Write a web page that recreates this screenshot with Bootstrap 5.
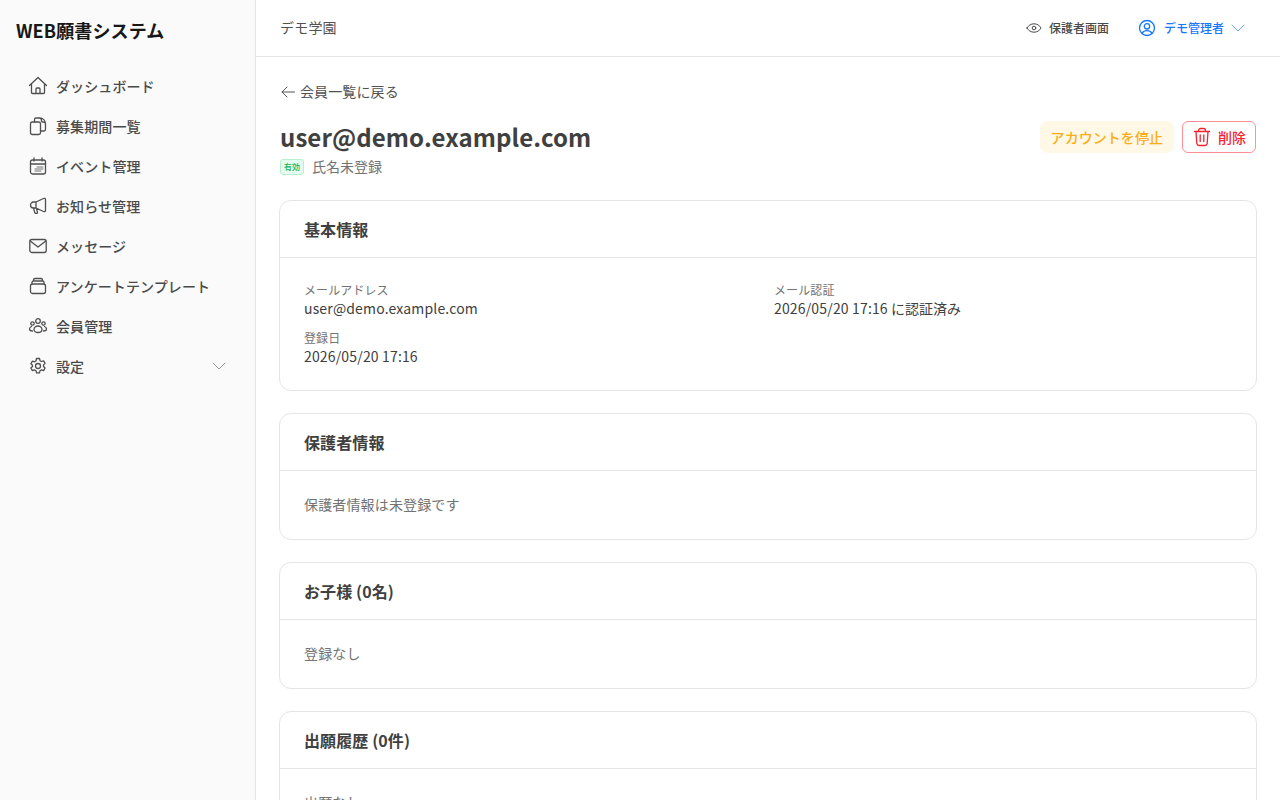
<!DOCTYPE html>
<html lang="ja">
<head>
<meta charset="utf-8">
<title>WEB願書システム</title>
<link href="https://cdn.jsdelivr.net/npm/bootstrap@5.3.0/dist/css/bootstrap.min.css" rel="stylesheet">
<style>
html,body{height:100%;overflow:hidden}
body{font-family:"Noto Sans CJK JP","Noto Sans",sans-serif;color:#3f3f3f;background:#fff;font-size:14px}
.shell{height:800px}
.side{width:256px;flex:none;background:#fafafa;border-right:1px solid #e5e5e5;height:100%}
.brand{font-size:18px;font-weight:700;color:#171717;line-height:26px;padding:17px 16px 27px;letter-spacing:.12px}
.menu{padding:0 16px;display:flex;flex-direction:column;gap:8px}
.menu a{display:flex;align-items:center;gap:8px;height:32px;padding:0 12px;color:#4a4a4a;text-decoration:none;font-size:14px;font-weight:500;letter-spacing:.1px}
.menu svg{width:20px;height:20px;flex:none;color:#4f4f4f}
.menu .chev{width:16px;height:16px;margin-left:auto;margin-right:-1px;color:#999;stroke-width:1}
.ic{fill:none;stroke:currentColor;stroke-width:1.300;stroke-linecap:round;stroke-linejoin:round}
.ic .fine{stroke-width:.8}
.ic.thin{stroke-width:1}
.topbar{height:57px;flex:none;border-bottom:1px solid #e5e5e5;padding:0 35px 1px 24px}
.school{font-size:14px;color:#525252;letter-spacing:.2px}
.toplink{font-size:12px;font-weight:500;color:#4a4a4a;text-decoration:none;display:flex;align-items:center;gap:7px}
.toplink.blue{color:#1677ff;margin-left:13px;gap:7px}
.toplink.blue .uic{margin-right:1px}
.chev-top{margin-left:0;stroke-width:.9;opacity:.7}
.content{padding:24px;overflow:hidden}
.backlink{font-size:14px;color:#525252;text-decoration:none;display:flex;align-items:center;gap:4px;line-height:21px;letter-spacing:.12px}
.head-row{margin:19px 0 23px}
.ttl{font-size:24px;font-weight:700;line-height:32px;color:#404040;margin:0;letter-spacing:.1px}
.tag-ok{font-size:8px;line-height:14px;padding:0 3px;border:1px solid #b7f0cf;background:#e6fbef;color:#12b357;border-radius:3px;font-weight:500}
.sub{font-size:14px;color:#737373;line-height:21px;margin-top:3px}
.btn-warnish{background:#fff8e6;color:#faad14;border:0;border-radius:8px;font-size:14px;font-weight:500;height:32px;padding:0 11px;display:flex;align-items:center;letter-spacing:.05px}
.btn-del{background:#fff;color:#f5222d;border:1px solid #ff8f96;border-radius:6px;font-size:14px;font-weight:500;height:32px;padding:0 9px;display:flex;align-items:center;gap:6px}
.panel{border:1px solid #e5e5e5;border-radius:12px;margin:0 -1px 22px;background:#fff;overflow:hidden}
.panel-h{height:57px;padding:0 24px;border-bottom:1px solid #e5e5e5;font-size:16px;font-weight:700;color:#404040;display:flex;align-items:center;letter-spacing:.1px}
.panel-b{padding:23px 24px 24px;color:#737373;font-size:14px;line-height:21px;letter-spacing:.15px}
.info{padding:23px 24px 24px;display:grid;grid-template-columns:1fr 1fr;column-gap:12px;row-gap:11px}
.lbl{font-size:12px;color:#737373;line-height:17px;letter-spacing:.1px}
.val{font-size:14px;color:#404040;line-height:20px}
.lat{letter-spacing:.16px}
</style>
</head>
<body>
<div class="d-flex shell">
<aside class="side">
  <div class="brand">WEB願書システム</div>
  <nav class="menu">
    <a href="#"><svg class="ic" viewBox="0 0 20 20"><path d="M1.500 9.500 10 1.500 18.500 9.500M3.500 8V16.500A1 1 0 0 0 4.500 17.500H15.500A1 1 0 0 0 16.500 16.500V8M8 17.500V13A1 1 0 0 1 9 12H11A1 1 0 0 1 12 13V17.500"/></svg>ダッシュボード</a>
    <a href="#"><svg class="ic" viewBox="0 0 20 20"><path d="M6.500 6V3.500A1.500 1.500 0 0 1 8 2H11.500C15 2 17.500 4.500 17.500 8V13.500A1.500 1.500 0 0 1 16 15H12.500M11.500 2C13 2 13.500 3 13.500 4.500V5A1 1 0 0 0 14.500 6H15C16.500 6 17.500 6.500 17.500 8"/><rect x="2.500" y="6" width="10" height="12.500" rx="1.800"/></svg>募集期間一覧</a>
    <a href="#"><svg class="ic" viewBox="0 0 20 20"><rect x="2.500" y="4" width="15" height="14" rx="2"/><path d="M6 2V5M14 2V5M2.500 8H17.500"/><path class="fine" d="M9 11H15M7 13H15M7 15H13"/></svg>イベント管理</a>
    <a href="#"><svg class="ic" viewBox="0 0 20 20"><path d="M8 6H5.500a3 3 0 0 0 0 6H8M8 6 15.500 2.500C16.500 2 17.500 2.500 17.500 3.500V14.500C17.500 15.500 16.500 16 15.500 15.500L8 12ZM5.500 12 6.800 16.800A.8.8 0 0 0 7.500 17.300H9A.6.6 0 0 0 9.500 16.600L8.500 12.300"/></svg>お知らせ管理</a>
    <a href="#"><svg class="ic" viewBox="0 0 20 20"><rect x="1.800" y="3.500" width="16.400" height="13" rx="2"/><path d="M2.200 5 10 11 17.800 5"/></svg>メッセージ</a>
    <a href="#"><svg class="ic" viewBox="0 0 20 20"><rect x="2.500" y="8" width="15" height="9.500" rx="2"/><path d="M4 8V6.500A1.500 1.500 0 0 1 5.500 5H14.500A1.500 1.500 0 0 1 16 6.500V8M5.500 5V4A1.500 1.500 0 0 1 7 2.500H13A1.500 1.500 0 0 1 14.500 4V5"/></svg>アンケートテンプレート</a>
    <a href="#"><svg class="ic" viewBox="0 0 20 20"><circle cx="10" cy="5" r="2.300"/><circle cx="4.500" cy="7.500" r="1.700"/><circle cx="15.500" cy="7.500" r="1.700"/><path d="M6 13.500c0-2 2-3.500 4-3.500s4 1.500 4 3.500-2 3-4 3-4-1-4-3ZM3.500 10.500C2 11 1.500 12 1.500 13s1 2 3 2M16.500 10.500C18 11 18.500 12 18.500 13s-1 2-3 2"/></svg>会員管理</a>
    <a href="#"><svg class="ic" viewBox="0 0 20 20"><circle cx="10" cy="10" r="2.500"/><path d="M8.500 2.500h3l.5 2.200 1.500.8 2.100-.7 1.500 2.600-1.600 1.500v1.600l1.600 1.500-1.500 2.600-2.100-.7-1.500.8-.5 2.200h-3l-.5-2.200-1.500-.8-2.100.7-1.500-2.600 1.600-1.500V9.200L2.900 7.700l1.500-2.600 2.100.7 1.500-.8z"/></svg>設定<svg class="ic chev" viewBox="0 0 16 16"><path d="M1 5 7 11 13 5"/></svg></a>
  </nav>
</aside>
<div class="flex-grow-1 d-flex flex-column min-w-0">
  <header class="topbar d-flex align-items-center justify-content-between">
    <div class="school">デモ学園</div>
    <div class="d-flex align-items-center gap-3">
      <a class="toplink" href="#"><svg class="ic thin" width="16" height="16" viewBox="0 0 16 16"><path d="M1 8C2.500 5.300 5 3.800 8 3.800S13.500 5.300 15 8C13.500 10.700 11 12.200 8 12.200S2.500 10.700 1 8Z"/><circle cx="8" cy="8" r="1.800"/></svg>保護者画面</a>
      <a class="toplink blue" href="#"><svg class="ic uic" width="18" height="18" viewBox="0 0 18 18"><circle cx="9" cy="9" r="7.500"/><circle cx="9" cy="7.300" r="2.700"/><path d="M4 14.500c1-2 3-2.800 5-2.800s4 .8 5 2.800"/></svg><span>デモ管理者</span><svg class="ic chev-top" width="14" height="14" viewBox="0 0 14 14"><path d="M1 4 7 10 13 4"/></svg></a>
    </div>
  </header>
  <main class="content flex-grow-1">
    <a class="backlink" href="#"><svg class="ic thin" width="16" height="16" viewBox="0 0 16 16"><path d="M14.500 8H2M7 3 2 8 7 13"/></svg>会員一覧に戻る</a>
    <div class="d-flex justify-content-between align-items-start head-row">
      <div>
        <h1 class="ttl">user@demo.example.com</h1>
        <div class="d-flex align-items-center gap-2 sub"><span class="tag-ok">有効</span><span>氏名未登録</span></div>
      </div>
      <div class="d-flex gap-2">
        <button class="btn-warnish" type="button">アカウントを停止</button>
        <button class="btn-del" type="button"><svg class="ic" width="20" height="20" viewBox="0 0 20 20"><path d="M2.500 4.500H17.500M6.500 4.500V3.500A2 2 0 0 1 8.500 1.500H11.500A2 2 0 0 1 13.500 3.500V4.500M4 4.500 4.800 16.500A2.300 2.300 0 0 0 7 18.500H13A2.300 2.300 0 0 0 15.200 16.500L16 4.500M8.200 8V14.500M11.800 8V14.500"/></svg>削除</button>
      </div>
    </div>
    <section class="panel">
      <div class="panel-h">基本情報</div>
      <div class="info">
        <div><div class="lbl">メールアドレス</div><div class="val"><span class="lat">user@demo.example.com</span></div></div>
        <div><div class="lbl">メール認証</div><div class="val"><span class="lat">2026/05/20 17:16</span> に認証済み</div></div>
        <div><div class="lbl">登録日</div><div class="val"><span class="lat">2026/05/20 17:16</span></div></div>
      </div>
    </section>
    <section class="panel"><div class="panel-h">保護者情報</div><div class="panel-b">保護者情報は未登録です</div></section>
    <section class="panel"><div class="panel-h">お子様 (0名)</div><div class="panel-b">登録なし</div></section>
    <section class="panel"><div class="panel-h">出願履歴 (0件)</div><div class="panel-b">出願なし</div></section>
  </main>
</div>
</div>
<script src="https://cdn.jsdelivr.net/npm/bootstrap@5.3.0/dist/js/bootstrap.bundle.min.js"></script>
</body>
</html>
